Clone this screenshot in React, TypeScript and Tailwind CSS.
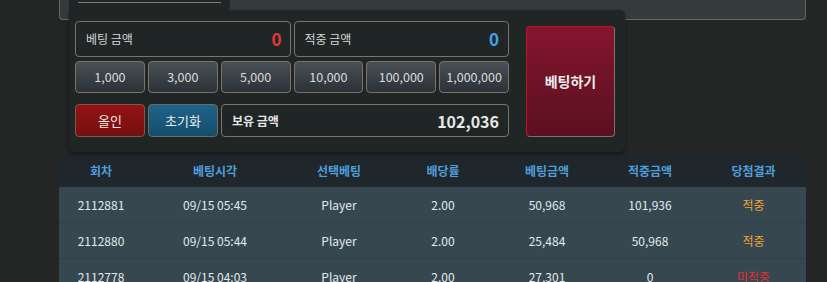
import React from "react";

const chips = ["1,000", "3,000", "5,000", "10,000", "100,000", "1,000,000"];

const rows = [
  { r: "2112881", t: "09/15 05:45", s: "Player", o: "2.00", b: "50,968", w: "101,936", res: "적중", win: true },
  { r: "2112880", t: "09/15 05:44", s: "Player", o: "2.00", b: "25,484", w: "50,968", res: "적중", win: true },
  { r: "2112778", t: "09/15 04:03", s: "Player", o: "2.00", b: "27,301", w: "0", res: "미적중", win: false },
];

const heads = ["회차", "베팅시각", "선택베팅", "배당률", "베팅금액", "적중금액", "당첨결과"];

export default function App() {
  return (
    <div
      className="w-[827px] h-[282px] overflow-hidden bg-[#232625] text-[#d8d8d8]"
      style={{ fontFamily: '"Noto Sans CJK KR", "Noto Sans", sans-serif' }}
    >
      {/* top panel */}
      <div className="ml-[59px] w-[747px] h-[20px] bg-[#333b3d] border-x border-b border-[#6e685c] rounded-b-[4px]" />

      {/* betting panel */}
      <div className="relative z-10 -mt-[20px] ml-[69px] w-[556px]">
        <div className="w-[161px] h-[10px] bg-[#202525] rounded-br-[4px] px-[9px]">
          <div className="h-[3px] border-b border-[#857b6b]" />
        </div>
        <div className="bg-[#202525] rounded-b-[5px] rounded-tr-[5px] shadow-[0_2px_4px_rgba(0,0,0,0.45)] pl-[6px] pr-[10px] pt-[11px] pb-[15px] flex gap-[17px]">
          <div className="w-[434px] flex flex-col">
            <div className="grid grid-cols-2 gap-[3px] h-[36px]">
              <div className="border border-[#7d7466] rounded-[4px] flex items-center justify-between pl-[10px] pr-[8px]">
                <span className="text-[12px] text-[#d6d6d6]">베팅 금액</span>
                <span className="text-[17px] font-bold text-[#e03b3b]">0</span>
              </div>
              <div className="border border-[#7d7466] rounded-[4px] flex items-center justify-between pl-[10px] pr-[9px]">
                <span className="text-[12px] text-[#d6d6d6]">적중 금액</span>
                <span className="text-[17px] font-bold text-[#4a9fe6]">0</span>
              </div>
            </div>
            <div className="grid grid-cols-6 gap-[3px] h-[32px] mt-[4px]">
              {chips.map((c) => (
                <div
                  key={c}
                  className="border border-[#7d7466] rounded-[4px] bg-gradient-to-b from-[#485056] to-[#2c3237] flex items-center justify-center text-[12.5px] text-[#dcdcdc]"
                >
                  {c}
                </div>
              ))}
            </div>
            <div className="grid grid-cols-[70px_70px_1fr] gap-[3px] h-[33px] mt-[11px]">
              <div className="border border-[#7a5a50] rounded-[4px] bg-gradient-to-b from-[#951212] to-[#741010] flex items-center justify-center text-[13px] text-[#f0e6e6]">
                올인
              </div>
              <div className="border border-[#6a6a62] rounded-[4px] bg-gradient-to-b from-[#1c6489] to-[#164c6c] flex items-center justify-center text-[13px] text-[#e6eef2]">
                초기화
              </div>
              <div className="border border-[#7d7466] rounded-[4px] flex items-center justify-between pl-[10px] pr-[9px]">
                <span className="text-[12px] font-bold text-[#e6e6e6]">보유 금액</span>
                <span className="text-[16px] font-bold text-[#e8e8e8]">102,036</span>
              </div>
            </div>
          </div>
          <div className="mt-[5px] w-[89px] h-[111px] rounded-[4px] border border-[#7d7466] border-t-[#c01420] border-l-[#c01420] bg-gradient-to-b from-[#85152e] to-[#5a1020] flex items-center justify-center text-[14px] font-bold text-[#ececec]">
            베팅하기
          </div>
        </div>
      </div>

      {/* table */}
      <div className="ml-[59px] w-[747px] mt-[3px]">
        <div className="grid grid-cols-[84px_144px_104px_104px_104px_102px_105px] h-[32px] bg-[#1f262c] items-center">
          {heads.map((h) => (
            <div key={h} className="text-center text-[12px] font-bold text-[#4f9fdc]">
              {h}
            </div>
          ))}
        </div>
        {rows.map((r) => (
          <div
            key={r.r}
            className="grid grid-cols-[84px_144px_104px_104px_104px_102px_105px] h-[36px] bg-[#37474f] border-b border-[#2c4150] items-center text-[12px] text-[#e2eaf0]"
          >
            <div className="text-center">{r.r}</div>
            <div className="text-center">{r.t}</div>
            <div className="text-center">{r.s}</div>
            <div className="text-center">{r.o}</div>
            <div className="text-center">{r.b}</div>
            <div className="text-center">{r.w}</div>
            <div className={r.win ? "text-center text-[#f0a535]" : "text-center text-[#e0303a]"}>{r.res}</div>
          </div>
        ))}
      </div>
    </div>
  );
}
